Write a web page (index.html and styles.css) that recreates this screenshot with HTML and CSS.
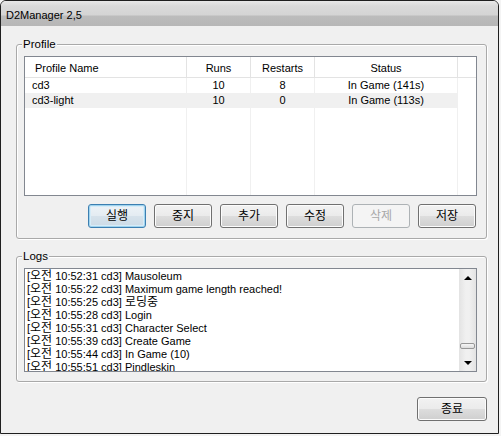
FILE: index.html
```html
<!DOCTYPE html>
<html>
<head>
<meta charset="utf-8">
<link rel="stylesheet" href="styles.css">
</head>
<body>
<div class="window">
  <div class="titlebar"><span class="title">D2Manager 2,5</span></div>
  <div class="client">
    <div class="group group-profile">
      <span class="legend">Profile</span>
      <div class="listview">
        <div class="hd c-name">Profile Name</div>
        <div class="hd c-num">Runs</div>
        <div class="hd c-num">Restarts</div>
        <div class="hd c-status">Status</div>
        <div class="hd c-fill"></div>

        <div class="cell c-name">cd3</div>
        <div class="cell c-num">10</div>
        <div class="cell c-num">8</div>
        <div class="cell c-status">In Game (141s)</div>
        <div class="cell c-fill"></div>

        <div class="cell alt c-name">cd3-light</div>
        <div class="cell alt c-num">10</div>
        <div class="cell alt c-num">0</div>
        <div class="cell alt c-status">In Game (113s)</div>
        <div class="cell c-fill"></div>

        <div class="cell empty"></div>
        <div class="cell empty"></div>
        <div class="cell empty"></div>
        <div class="cell empty"></div>
        <div class="cell empty c-fill"></div>
      </div>
      <div class="buttons">
        <button class="btn default">실행</button>
        <button class="btn">중지</button>
        <button class="btn">추가</button>
        <button class="btn">수정</button>
        <button class="btn" disabled>삭제</button>
        <button class="btn">저장</button>
      </div>
    </div>

    <div class="group group-logs">
      <span class="legend">Logs</span>
      <div class="logbox">
        <div class="loglines">
          <div class="line">[<span class="ko">오전</span> 10:52:31 cd3] Mausoleum</div>
          <div class="line">[<span class="ko">오전</span> 10:55:22 cd3] Maximum game length reached!</div>
          <div class="line">[<span class="ko">오전</span> 10:55:25 cd3] <span class="ko">로딩중</span></div>
          <div class="line">[<span class="ko">오전</span> 10:55:28 cd3] Login</div>
          <div class="line">[<span class="ko">오전</span> 10:55:31 cd3] Character Select</div>
          <div class="line">[<span class="ko">오전</span> 10:55:39 cd3] Create Game</div>
          <div class="line">[<span class="ko">오전</span> 10:55:44 cd3] In Game (10)</div>
          <div class="line">[<span class="ko">오전</span> 10:55:51 cd3] Pindleskin</div>
        </div>
        <div class="scrollbar">
          <div class="sb-btn"><span class="arrow-up"></span></div>
          <div class="sb-track"><div class="sb-thumb"></div></div>
          <div class="sb-btn"><span class="arrow-down"></span></div>
        </div>
      </div>
    </div>

    <div class="footer">
      <button class="btn btn-close">종료</button>
    </div>
  </div>
</div>
</body>
</html>
```

FILE: styles.css
```css
* { box-sizing: border-box; }

html, body {
  margin: 0;
  padding: 0;
  background: #f4f4f4;
}

body {
  font-family: "Liberation Sans", "Noto Sans CJK KR", sans-serif;
  font-size: 11px;
  color: #000;
}

.window {
  width: 499px;
  height: 434px;
  border: 1px solid #1f1f1f;
  border-radius: 6px 6px 0 0;
  background: #f0f0f0;
  display: flex;
  flex-direction: column;
  overflow: hidden;
}

.titlebar {
  height: 25px;
  flex: none;
  background: linear-gradient(to bottom, #e8e8e8 0px, #dadada 5px, #d4d4d4 14px, #bcbcbc 15px, #b7b7b7 25px);
  display: flex;
  align-items: center;
  padding-left: 5px;
}

.title {
  font-size: 11px;
  color: #000;
  padding-top: 2px;
}

.client {
  flex: 1;
  display: flex;
  flex-direction: column;
  padding: 0 11px 0 15px;
}

.group {
  position: relative;
  border: 1px solid #a9a9a9;
  border-radius: 3px;
  box-shadow: 1px 1px 0 #ffffff, inset 1px 1px 0 #ffffff;
  padding: 11px 9px 0 7px;
}

.group-profile {
  margin-top: 18px;
  height: 195px;
  width: 471px;
}

.group-logs {
  margin-top: 17px;
  height: 126px;
  width: 471px;
}

.legend {
  position: absolute;
  top: -8px;
  left: 5px;
  padding: 0 1px;
  background: #f0f0f0;
  line-height: 14px;
  font-size: 11.5px;
}

.listview {
  width: 453px;
  height: 140px;
  border: 1px solid #828790;
  background: #ffffff;
  display: grid;
  grid-template-columns: 162px 64px 64px 143px 1fr;
  grid-template-rows: 21px 15px 15px 1fr;
  overflow: hidden;
}

.hd {
  border-right: 1px solid #e3e3e3;
  border-bottom: 1px solid #e3e3e3;
  display: flex;
  align-items: center;
  justify-content: center;
  line-height: 14px;
  padding-top: 1px;
}

.hd.c-name {
  justify-content: flex-start;
  padding-left: 10px;
}

.hd.c-fill { border-right: none; }

.cell {
  border-right: 1px solid #f0f0f0;
  line-height: 15px;
  text-align: center;
  white-space: nowrap;
}

.cell.c-name {
  text-align: left;
  padding-left: 7px;
}

.cell.alt { background: #f0f0f0; }

.cell.c-fill { border-right: none; }

.buttons {
  display: flex;
  justify-content: flex-end;
  gap: 8px;
  margin-top: 8px;
  padding-right: 1px;
}

.btn {
  width: 58px;
  height: 24px;
  border: 1px solid #707070;
  border-radius: 3px;
  background: linear-gradient(to bottom, #f2f2f2 0%, #ebebeb 48%, #dddddd 52%, #cfcfcf 100%);
  box-shadow: inset 0 0 0 1px #fcfcfc;
  font-family: "Liberation Sans", "Noto Sans CJK KR", sans-serif;
  font-size: 12px;
  color: #000;
  padding: 0;
  line-height: 20px;
}

.btn.default {
  border-color: #3c7fb1;
  box-shadow: inset 0 0 0 1px #9fd3ee, inset 0 0 0 2px #d6ecf8;
  background: linear-gradient(to bottom, #eef3f7 0%, #e4ecf2 48%, #d6e2eb 52%, #ccdbe6 100%);
}

.btn:disabled {
  border-color: #adb2b5;
  background: #f4f4f4;
  box-shadow: none;
  color: #a8a8a8;
}

.logbox {
  width: 453px;
  height: 104px;
  border: 1px solid #828790;
  background: #ffffff;
  display: flex;
  overflow: hidden;
}

.loglines {
  flex: 1;
  padding: 1px 0 0 2px;
  overflow: hidden;
}

.line {
  height: 13px;
  line-height: 13px;
  white-space: nowrap;
}

.ko {
  font-size: 12px;
}

.scrollbar {
  width: 17px;
  flex: none;
  display: flex;
  flex-direction: column;
  background: linear-gradient(to right, #e3e3e3, #f0f0f0 40%, #f0f0f0 60%, #e3e3e3);
}

.sb-btn {
  height: 17px;
  flex: none;
  display: flex;
  align-items: center;
  justify-content: center;
}

.arrow-up {
  width: 0;
  height: 0;
  border-left: 4px solid transparent;
  border-right: 4px solid transparent;
  border-bottom: 4px solid #000;
}

.arrow-down {
  width: 0;
  height: 0;
  border-left: 4px solid transparent;
  border-right: 4px solid transparent;
  border-top: 4px solid #000;
}

.sb-track {
  flex: 1;
  display: flex;
  flex-direction: column;
  justify-content: flex-end;
  padding: 0 1px 5px;
}

.sb-thumb {
  height: 6px;
  border: 1px solid #979797;
  border-radius: 2px;
  background: linear-gradient(to bottom, #f6f6f6, #dcdcdc);
}

.footer {
  display: flex;
  justify-content: flex-end;
  margin-top: 15px;
}

.btn-close {
  width: 70px;
  height: 24px;
}
```
